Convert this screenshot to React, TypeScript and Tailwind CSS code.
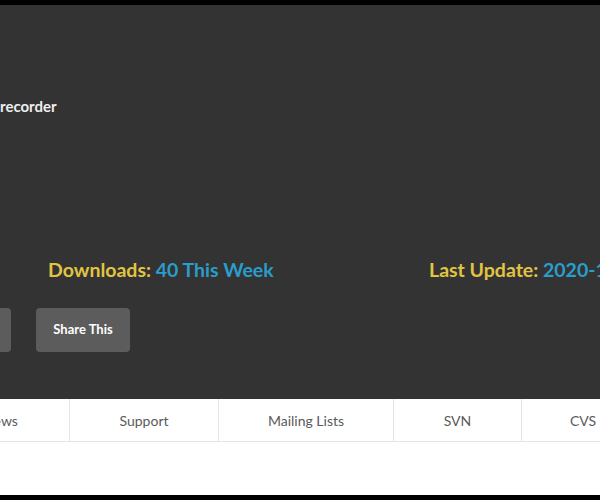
const tabs = [
  { label: "News", w: "w-[138px]" },
  { label: "Support", w: "w-[149px]" },
  { label: "Mailing Lists", w: "w-[175px]" },
  { label: "SVN", w: "w-[128px]" },
  { label: "CVS", w: "w-[122px]" },
];

const App = () => {
  return (
    <div className="w-[600px] h-[500px] overflow-hidden bg-black font-['Lato','Open_Sans',sans-serif]">
      {/* Project header */}
      <div className="mt-[5px] h-[394px] bg-[#333333] flex flex-col">
        <div className="pt-[93px] pl-0">
          <h1 className="text-[15px] font-bold text-[#eeeeee] leading-[16px]">recorder</h1>
        </div>

        <div className="mt-[144px] flex items-center h-[24px] text-[19.5px] font-bold">
          <div className="pl-[48px] w-[429px] shrink-0">
            <span className="text-[#e2c443]">Downloads: </span>
            <span className="text-[#2b9dca]">40 This Week</span>
          </div>
          <div className="whitespace-nowrap shrink-0">
            <span className="text-[#e2c443]">Last Update: </span>
            <span className="text-[#2b9dca]">2020-11-02</span>
          </div>
        </div>

        <div className="mt-[26px] flex gap-[25px]">
          <button className="w-[11px] h-[44px] bg-[#5c5c5c] rounded-r-[4px]" />
          <button className="w-[94px] h-[44px] bg-[#5c5c5c] rounded-[4px] text-white text-[13px] font-bold">
            Share This
          </button>
        </div>
      </div>

      {/* Tabs */}
      <div className="bg-white h-[96px]">
        <div className="flex ml-[-68px] h-[43px] border-b border-[#e4e4e4]">
          {tabs.map((t, i) => (
            <div
              key={t.label}
              className={`${t.w} shrink-0 flex items-center justify-center text-[14px] text-[#5a5a5a] ${i < tabs.length - 1 ? "border-r border-[#e4e4e4]" : ""}`}
            >
              {t.label}
            </div>
          ))}
        </div>
      </div>
    </div>
  );
};

export default App;
